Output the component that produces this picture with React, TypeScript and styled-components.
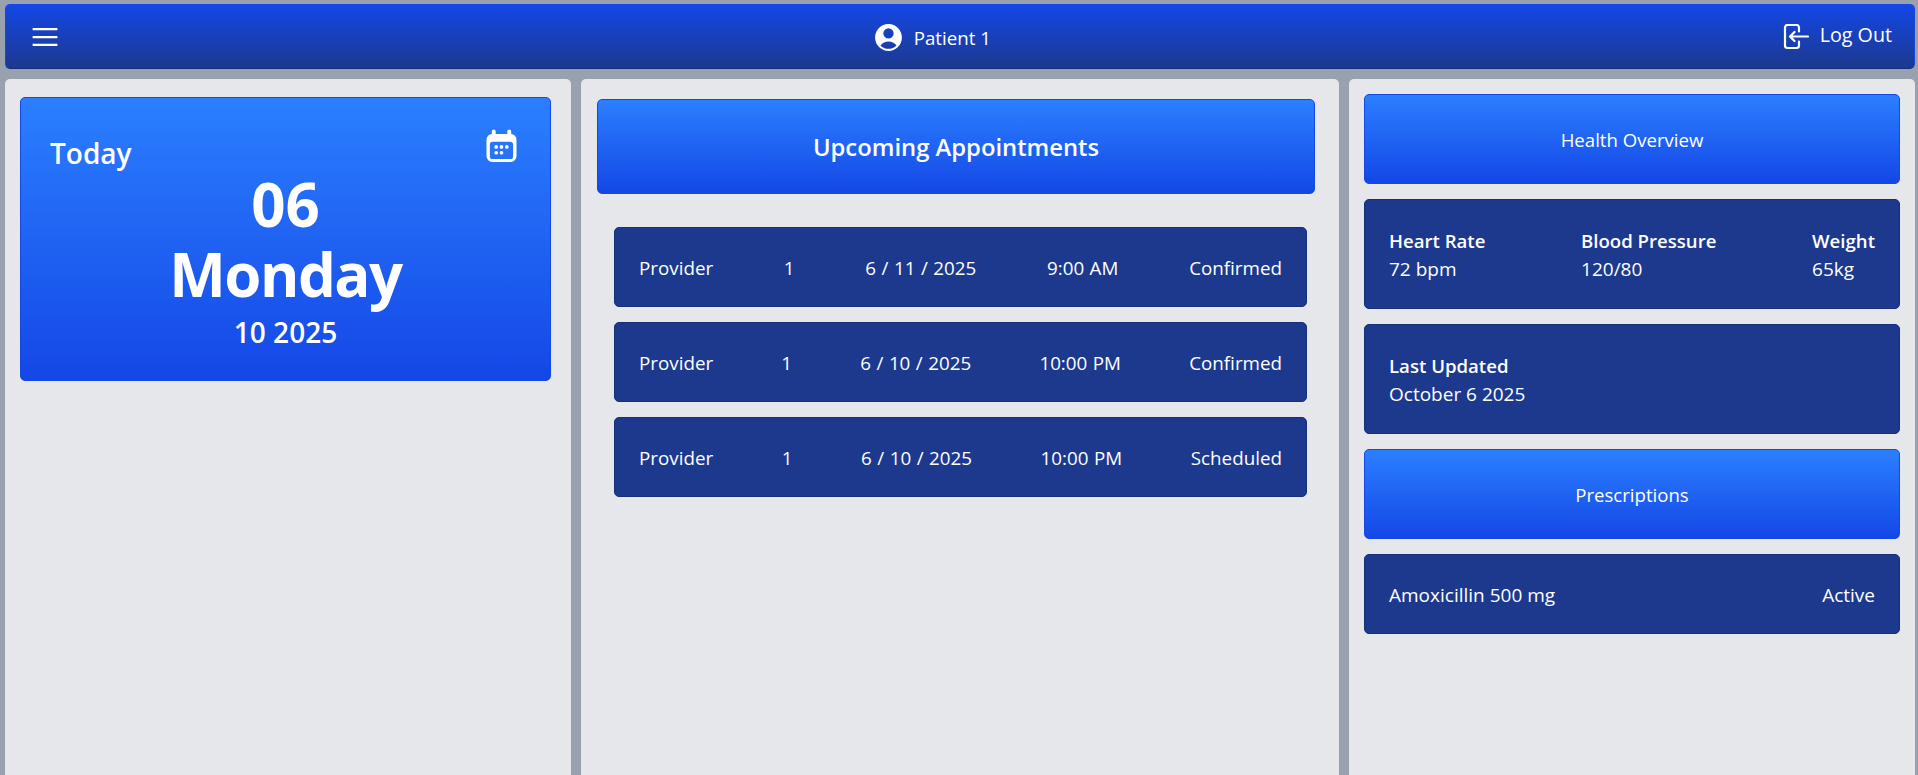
import styled, {createGlobalStyle} from 'styled-components';

const GlobalStyle = createGlobalStyle`
  html, body {
    margin: 0;
    height: 100%;
    overflow: hidden;
    background: #99a1af;
    font-family: "Open Sans", "Noto Sans", sans-serif;
    color: #fff;
  }
  * {
    box-sizing: border-box;
  }
`;

const appointments = [
    {date: "6 / 11 / 2025", time: "9:00 AM", status: "Confirmed"},
    {date: "6 / 10 / 2025", time: "10:00 PM", status: "Confirmed"},
    {date: "6 / 10 / 2025", time: "10:00 PM", status: "Scheduled"},
];

function MenuIcon() {
    return (
        <svg width="36" height="36" viewBox="0 0 24 24" fill="none" stroke="#fff" strokeWidth="1.5">
            <path d="M3.75 6.75h16.5M3.75 12h16.5m-16.5 5.25h16.5"/>
        </svg>
    );
}

function UserIcon() {
    return (
        <svg width="33" height="33" viewBox="0 0 24 24" fill="#fff">
            <path fillRule="evenodd" clipRule="evenodd"
                  d="M18.685 19.097A9.723 9.723 0 0 0 21.75 12c0-5.385-4.365-9.75-9.75-9.75S2.25 6.615 2.25 12a9.723 9.723 0 0 0 3.065 7.097A9.716 9.716 0 0 0 12 21.750a9.716 9.716 0 0 0 6.685-2.653Zm-12.54-1.285A7.486 7.486 0 0 1 12 15a7.486 7.486 0 0 1 5.855 2.812A8.224 8.224 0 0 1 12 20.250a8.224 8.224 0 0 1-5.855-2.438ZM15.750 9a3.750 3.750 0 1 1-7.500 0 3.750 3.750 0 0 1 7.500 0Z"/>
        </svg>
    );
}

function LogOutIcon() {
    return (
        <svg width="26" height="26" viewBox="0 0 26 26" fill="none" stroke="#fff" strokeWidth="2.2" strokeLinecap="round" strokeLinejoin="round">
            <path d="M16 7.500V3.500A2.500 2.500 0 0 0 13.500 1H4.500A2.500 2.500 0 0 0 2 3.500v18A2.500 2.500 0 0 0 4.500 24h9a2.500 2.500 0 0 0 2.500-2.500V17.500"/>
            <path d="M25 12.500H7M7 12.500l4.500-4.500M7 12.500l4.500 4.500"/>
        </svg>
    );
}

function CalendarIcon() {
    return (
        <svg width="31" height="33" viewBox="0 0 32 34" fill="#fff">
            <path fillRule="evenodd" clipRule="evenodd"
                  d="M8 0.500a2 2 0 0 1 2 2V5h12V2.500a2 2 0 1 1 4 0V5.200A6 6 0 0 1 31.500 11v17a6 6 0 0 1-6 6h-19a6 6 0 0 1-6-6V11A6 6 0 0 1 6 5.200V2.500a2 2 0 0 1 2-2ZM7 13a3 3 0 0 0-3 3v12a3 3 0 0 0 3 3h18a3 3 0 0 0 3-3V16a3 3 0 0 0-3-3H7Z"/>
            <circle cx="10.500" cy="18.500" r="1.900"/>
            <circle cx="16" cy="18.500" r="1.900"/>
            <circle cx="21.500" cy="18.500" r="1.900"/>
            <circle cx="10.500" cy="24.500" r="1.900"/>
            <circle cx="16" cy="24.500" r="1.900"/>
        </svg>
    );
}

export default function App() {
    return (
        <Page>
            <GlobalStyle/>
            <TopBar>
                <MenuIcon/>
                <PatientName>
                    <UserIcon/>
                    <span>Patient 1</span>
                </PatientName>
                <LogOut>
                    <LogOutIcon/>
                    <LogOutLabel>Log Out</LogOutLabel>
                </LogOut>
            </TopBar>

            <Columns>
                <Panel>
                    <DateCard>
                        <DateCardTop>
                            <Today>Today</Today>
                            <CalendarIcon/>
                        </DateCardTop>
                        <DayNumber>06</DayNumber>
                        <DayName>Monday</DayName>
                        <MonthYear>10 2025</MonthYear>
                    </DateCard>
                </Panel>

                <AppointmentsPanel>
                    <SectionHeader $height={95} $large>Upcoming Appointments</SectionHeader>
                    <AppointmentList>
                        {appointments.map((appointment, index) => (
                            <AppointmentRow key={index}>
                                <span>Provider</span>
                                <span>1</span>
                                <span>{appointment.date}</span>
                                <span>{appointment.time}</span>
                                <span>{appointment.status}</span>
                            </AppointmentRow>
                        ))}
                    </AppointmentList>
                </AppointmentsPanel>

                <HealthPanel>
                    <SectionHeader $height={90}>Health Overview</SectionHeader>
                    <InfoCard>
                        <Stat><b>Heart Rate</b><span>72 bpm</span></Stat>
                        <Stat><b>Blood Pressure</b><span>120/80</span></Stat>
                        <Stat><b>Weight</b><span>65kg</span></Stat>
                    </InfoCard>
                    <InfoCard>
                        <Stat><b>Last Updated</b><span>October 6 2025</span></Stat>
                    </InfoCard>
                    <SectionHeader $height={90}>Prescriptions</SectionHeader>
                    <PrescriptionRow>
                        <span>Amoxicillin 500 mg</span>
                        <span>Active</span>
                    </PrescriptionRow>
                </HealthPanel>
            </Columns>
        </Page>
    );
}

const Page = styled.div`
  height: 775px;
  overflow: hidden;
  padding: 4px 3px 0 5px;
  background: #99a1af;
`;

const TopBar = styled.header`
  height: 65px;
  display: flex;
  justify-content: space-between;
  align-items: center;
  padding: 0 22px 0 21px;
  border: 1px solid #1447e6;
  border-bottom-color: #162f7a;
  border-radius: 5px;
  background: linear-gradient(to bottom, #1447e6, #1c398e);
`;

const PatientName = styled.div`
  display: flex;
  align-items: center;
  gap: 9px;
  margin: 1px 0 0 17px;
  font-size: 18.7px;
`;

const LogOut = styled.div`
  display: flex;
  align-items: center;
  gap: 11px;
`;

const LogOutLabel = styled.span`
  font-size: 19.7px;
  margin-top: -4px;
`;

const Columns = styled.main`
  display: grid;
  grid-template-columns: 566px 758px 566px;
  gap: 10px;
  margin-top: 10px;
`;

const Panel = styled.section`
  height: 720px;
  padding: 18px 20px 0 15px;
  border-radius: 5px;
  background: #e5e7eb;
`;

const AppointmentsPanel = styled(Panel)`
  padding: 20px 24px 0 16px;
`;

const HealthPanel = styled(Panel)`
  display: flex;
  flex-direction: column;
  gap: 15px;
  padding: 15px 15px 0 15px;
`;

const DateCard = styled.div`
  height: 284px;
  padding-top: 31px;
  border: 1px solid #1447e6;
  border-radius: 5px;
  background: linear-gradient(to bottom, #2b7fff, #1447e6);
  text-align: center;
`;

const DateCardTop = styled.div`
  height: 40px;
  display: flex;
  justify-content: space-between;
  align-items: flex-start;
  padding: 0 33px 0 29px;
`;

const Today = styled.span`
  font-size: 28px;
  font-weight: 600;
  line-height: 36px;
  margin-top: 6px;
`;

const DayNumber = styled.div`
  font-size: 60px;
  font-weight: 700;
  line-height: 70px;
`;

const DayName = styled(DayNumber)`
  letter-spacing: -1.5px;
`;

const MonthYear = styled.div`
  margin-top: 3px;
  font-size: 28px;
  font-weight: 600;
  line-height: 40px;
`;

const SectionHeader = styled.div<{ $height: number, $large?: boolean }>`
  height: ${(props) => props.$height}px;
  display: flex;
  align-items: center;
  justify-content: center;
  padding-top: 1px;
  border: 1px solid #1447e6;
  border-radius: 5px;
  background: linear-gradient(to bottom, #2b7fff, #1447e6);
  font-size: ${(props) => (props.$large ? '23.8px' : '18.6px')};
  font-weight: ${(props) => (props.$large ? 600 : 400)};
`;

const AppointmentList = styled.div`
  display: flex;
  flex-direction: column;
  gap: 15px;
  margin: 33px 8px 0 17px;
`;

const AppointmentRow = styled.div`
  height: 80px;
  display: flex;
  align-items: center;
  justify-content: space-between;
  padding: 2px 24px 0 24px;
  border: 1px solid #162f7a;
  border-radius: 5px;
  background: #1c398e;
  font-size: 18.8px;
  word-spacing: 0.6px;
`;

const InfoCard = styled.div`
  height: 110px;
  display: flex;
  align-items: center;
  justify-content: space-between;
  padding: 2px 24px 0;
  border: 1px solid #162f7a;
  border-radius: 5px;
  background: #1c398e;
  font-size: 19px;
`;

const Stat = styled.div`
  display: flex;
  flex-direction: column;
  gap: 2px;
  line-height: 27px;

  b {
    font-size: 18.6px;
    font-weight: 600;
  }
`;

const PrescriptionRow = styled(InfoCard)`
  height: 80px;
`;
